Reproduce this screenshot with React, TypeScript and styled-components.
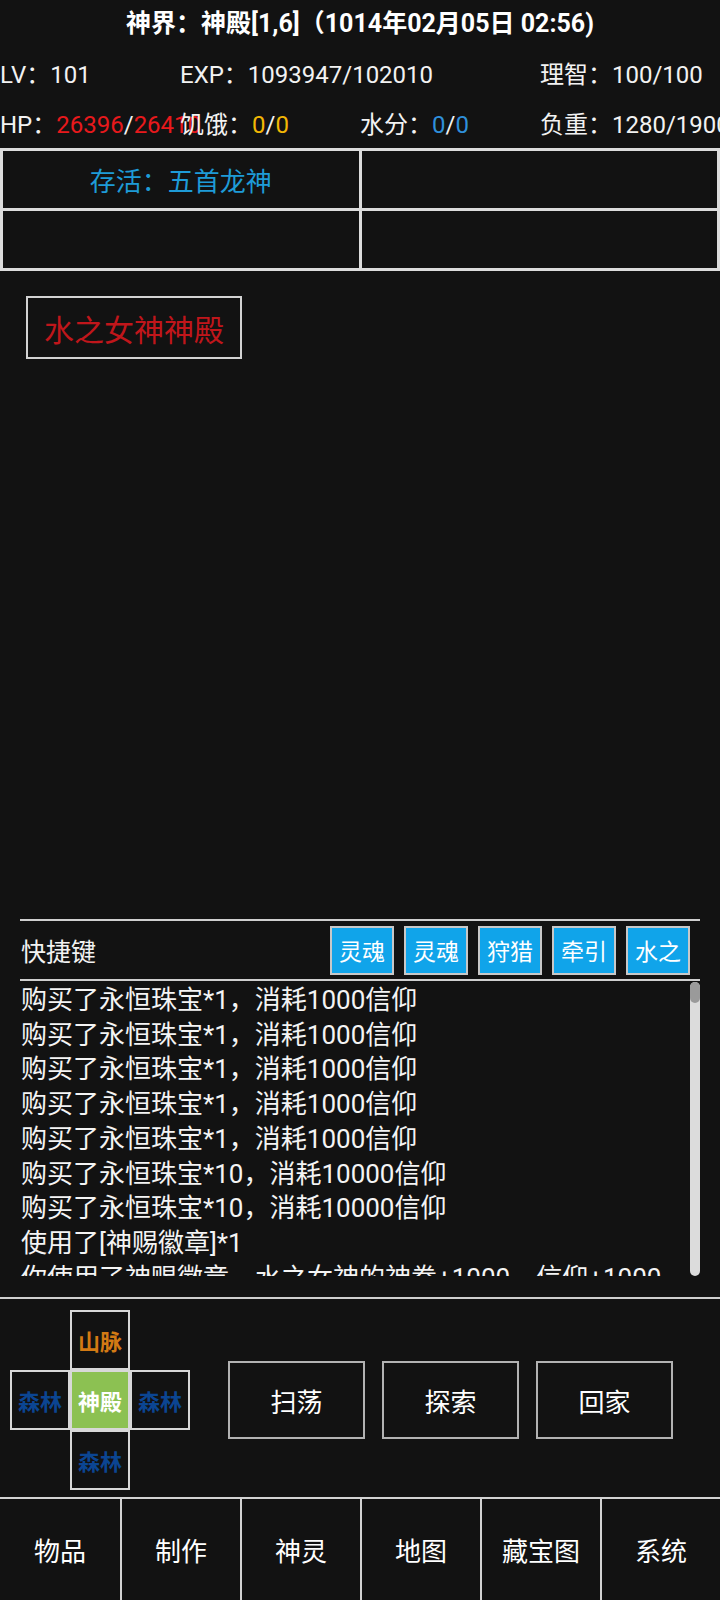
import React from 'react';
import styled, { createGlobalStyle } from 'styled-components';

const GlobalStyle = createGlobalStyle`
  html, body { margin: 0; padding: 0; background: #121212; }
  body {
    font-family: Roboto, "Noto Sans CJK SC", sans-serif;
    color: #f2f2f2;
  }
  * { box-sizing: border-box; }
`;

const Page = styled.div`
  width: 720px;
  height: 1600px;
  background: #121212;
  display: flex;
  flex-direction: column;
  overflow: hidden;
`;

const Title = styled.div`
  height: 48px;
  line-height: 48px;
  text-align: center;
  font-size: 25px;
  font-weight: 700;
  color: #ffffff;
  white-space: nowrap;
`;

const Stats = styled.div`
  display: grid;
  grid-template-columns: repeat(4, 180px);
  grid-auto-rows: 28px;
  row-gap: 22px;
  padding: 13px 0 9px;
  font-size: 24px;
  line-height: 28px;
`;

const Stat = styled.div<{ $span?: number }>`
  grid-column: span ${(p) => p.$span ?? 1};
  white-space: nowrap;
`;

const Val = styled.span<{ $c?: string }>`
  color: ${(p) => p.$c ?? 'inherit'};
`;

const Board = styled.div`
  display: grid;
  grid-template-columns: 1fr 1fr;
  grid-auto-rows: 57px;
  gap: 3px;
  padding: 3px;
  background: #dcdcdc;
`;

const BoardCell = styled.div`
  background: #121212;
  display: flex;
  align-items: center;
  justify-content: center;
  font-size: 26px;
  color: #1e9bd7;
`;

const Scene = styled.div`
  flex: 1;
  display: flex;
  flex-direction: column;
  align-items: flex-start;
  padding: 25px 26px;
`;

const PlaceButton = styled.div`
  height: 63px;
  padding: 0 16px;
  border: 2px solid #d2d2d2;
  display: flex;
  align-items: center;
  font-size: 30px;
  color: #c0161b;
`;

const QuickPanel = styled.section`
  margin: 0 20px;
  display: flex;
  flex-direction: column;
`;

const QuickBar = styled.div`
  height: 62px;
  border-top: 2px solid #cfcfcf;
  border-bottom: 2px solid #cfcfcf;
  display: flex;
  align-items: center;
  justify-content: space-between;
  padding: 0 10px 0 1px;
`;

const QuickLabel = styled.div`
  font-size: 25px;
  color: #f2f2f2;
`;

const QuickButtons = styled.div`
  display: flex;
  gap: 10px;
`;

const QuickButton = styled.div`
  width: 64px;
  height: 49px;
  border: 2px solid #c8c8c8;
  background: #10a4ea;
  color: #ffffff;
  font-size: 23px;
  display: flex;
  align-items: center;
  justify-content: center;
`;

const Log = styled.div`
  height: 295px;
  display: flex;
`;

const LogText = styled.div`
  flex: 1;
  overflow: hidden;
  padding: 2px 0 0 1px;
  font-size: 26px;
  line-height: 34.7px;
  white-space: nowrap;
  color: #f4f4f4;
`;

const ScrollTrack = styled.div`
  width: 10px;
  margin-top: 1px;
  background: #dcdcdc;
  border-radius: 5px;
  display: flex;
  flex-direction: column;
`;

const ScrollThumb = styled.div`
  height: 21px;
  background: #9a9a9a;
  border-radius: 5px;
`;

const Divider = styled.div`
  margin-top: 21px;
  height: 2px;
  background: #cfcfcf;
`;

const Controls = styled.div`
  height: 198px;
  display: flex;
  align-items: center;
  padding: 4px 0 0 10px;
`;

const Dpad = styled.div`
  display: grid;
  grid-template-columns: repeat(3, 60px);
  grid-template-rows: repeat(3, 60px);
`;

const DpadCell = styled.div<{ $col: number; $row: number; $color: string; $bg?: string }>`
  grid-column: ${(p) => p.$col};
  grid-row: ${(p) => p.$row};
  border: 2px solid #d8d8d8;
  background: ${(p) => p.$bg ?? '#121212'};
  color: ${(p) => p.$color};
  font-size: 22px;
  font-weight: 700;
  display: flex;
  align-items: center;
  justify-content: center;
  white-space: nowrap;
`;

const Actions = styled.div`
  margin-left: 38px;
  display: flex;
  gap: 17px;
`;

const ActionButton = styled.div`
  width: 137px;
  height: 78px;
  border: 2px solid #b2b2b2;
  color: #ffffff;
  font-size: 26px;
  display: flex;
  align-items: center;
  justify-content: center;
`;

const Nav = styled.nav`
  height: 103px;
  border-top: 2px solid #d2d2d2;
  display: grid;
  grid-template-columns: repeat(6, 1fr);
`;

const NavItem = styled.div<{ $first?: boolean }>`
  border-left: ${(p) => (p.$first ? 'none' : '2px solid #d2d2d2')};
  display: flex;
  align-items: center;
  justify-content: center;
  font-size: 26px;
  color: #ffffff;
`;

const logLines = [
  '购买了永恒珠宝*1，消耗1000信仰',
  '购买了永恒珠宝*1，消耗1000信仰',
  '购买了永恒珠宝*1，消耗1000信仰',
  '购买了永恒珠宝*1，消耗1000信仰',
  '购买了永恒珠宝*1，消耗1000信仰',
  '购买了永恒珠宝*10，消耗10000信仰',
  '购买了永恒珠宝*10，消耗10000信仰',
  '使用了[神赐徽章]*1',
  '你使用了神赐徽章，水之女神的神眷+1000，信仰+1000',
  '你获得了神赐徽章的祝福',
];

const quickKeys = ['灵魂', '灵魂', '狩猎', '牵引', '水之'];
const navItems = ['物品', '制作', '神灵', '地图', '藏宝图', '系统'];

export default function App() {
  return (
    <>
      <GlobalStyle />
      <Page>
        <Title>神界：神殿[1,6]（1014年02月05日 02:56)</Title>
        <Stats>
          <Stat>LV：101</Stat>
          <Stat $span={2}>EXP：1093947/102010</Stat>
          <Stat>理智：100/100</Stat>
          <Stat>
            HP：<Val $c="#e8191c">26396</Val>/<Val $c="#e8191c">26410</Val>
          </Stat>
          <Stat>
            饥饿：<Val $c="#f2b705">0</Val>/<Val $c="#f2b705">0</Val>
          </Stat>
          <Stat>
            水分：<Val $c="#2f8fdb">0</Val>/<Val $c="#2f8fdb">0</Val>
          </Stat>
          <Stat>负重：1280/1900</Stat>
        </Stats>
        <Board>
          <BoardCell>存活：五首龙神</BoardCell>
          <BoardCell />
          <BoardCell />
          <BoardCell />
        </Board>
        <Scene>
          <PlaceButton>水之女神神殿</PlaceButton>
        </Scene>
        <QuickPanel>
          <QuickBar>
            <QuickLabel>快捷键</QuickLabel>
            <QuickButtons>
              {quickKeys.map((k, i) => (
                <QuickButton key={i}>{k}</QuickButton>
              ))}
            </QuickButtons>
          </QuickBar>
          <Log>
            <LogText>
              {logLines.map((l, i) => (
                <div key={i}>{l}</div>
              ))}
            </LogText>
            <ScrollTrack>
              <ScrollThumb />
            </ScrollTrack>
          </Log>
        </QuickPanel>
        <Divider />
        <Controls>
          <Dpad>
            <DpadCell $col={2} $row={1} $color="#d27a14">山脉</DpadCell>
            <DpadCell $col={1} $row={2} $color="#0b4592">森林</DpadCell>
            <DpadCell $col={2} $row={2} $color="#ffffff" $bg="#8cc152">神殿</DpadCell>
            <DpadCell $col={3} $row={2} $color="#0b4592">森林</DpadCell>
            <DpadCell $col={2} $row={3} $color="#0b4592">森林</DpadCell>
          </Dpad>
          <Actions>
            <ActionButton>扫荡</ActionButton>
            <ActionButton>探索</ActionButton>
            <ActionButton>回家</ActionButton>
          </Actions>
        </Controls>
        <Nav>
          {navItems.map((n, i) => (
            <NavItem key={n} $first={i === 0}>
              {n}
            </NavItem>
          ))}
        </Nav>
      </Page>
    </>
  );
}
